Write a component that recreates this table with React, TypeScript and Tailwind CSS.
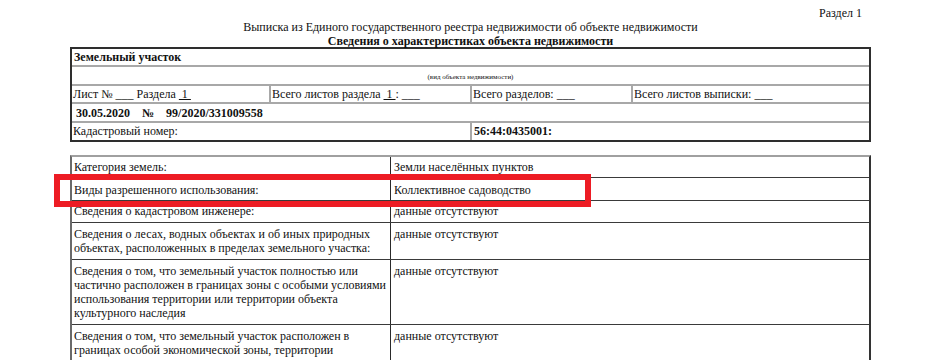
import React from "react";

const serif = { fontFamily: '"Liberation Serif", "Times New Roman", serif' };

function Row2({
  h,
  left,
  right,
  pt = "pt-[3px]",
  last = false,
}: {
  h: string;
  left: React.ReactNode;
  right: React.ReactNode;
  pt?: string;
  last?: boolean;
}) {
  return (
    <div className={`flex ${h} ${last ? "" : "border-b border-[#3a3a3a]"}`}>
      <div className={`w-[319px] shrink-0 border-r border-[#2a2a2a] pl-[2px] ${pt} whitespace-nowrap`}>{left}</div>
      <div className={`flex-1 pl-[3px] ${pt} whitespace-nowrap`}>{right}</div>
    </div>
  );
}

export default function App() {
  return (
    <div
      className="w-[940px] h-[360px] overflow-hidden bg-white text-[12px] leading-[14px] text-[#111]"
      style={serif}
    >
      {/* header */}
      <div className="w-[801px] ml-[70px] pt-[6px]">
        <div className="flex justify-end pr-[9px] h-[14px]">Раздел 1</div>
        <div className="text-center h-[14px]">
          Выписка из Единого государственного реестра недвижимости об объекте недвижимости
        </div>
        <div className="text-center font-bold h-[14px]">
          Сведения о характеристиках объекта недвижимости
        </div>
      </div>

      {/* table 1 */}
      <div className="w-[801px] ml-[70px] border-2 border-[#2e2e2e] mt-[-1px]">
        <div className="h-[18px] border-b-2 border-[#a8a8a8] pl-[2px] pt-[1px] font-bold">
          Земельный участок
        </div>
        <div className="h-[19px] border-b-2 border-[#a8a8a8] flex items-center justify-center text-[7px] leading-[8px] pt-[2px]">
          (вид объекта недвижимости)
        </div>
        <div className="h-[18px] border-b-2 border-[#a8a8a8] flex">
          <div className="w-[199px] shrink-0 border-r-2 border-[#a8a8a8] pl-[1px] pt-[1px]">
            Лист № ___ Раздела <span className="underline">&nbsp;1&nbsp;</span>
          </div>
          <div className="w-[201px] shrink-0 border-r-2 border-[#a8a8a8] pl-[1px] pt-[1px]">
            Всего листов раздела <span className="underline">&nbsp;1&nbsp;</span>: ___
          </div>
          <div className="w-[161px] shrink-0 border-r-2 border-[#a8a8a8] pl-[1px] pt-[1px]">
            Всего разделов: ___
          </div>
          <div className="flex-1 pl-[1px] pt-[1px]">Всего листов выписки: ___</div>
        </div>
        <div className="h-[19px] border-b-2 border-[#a8a8a8] pl-[4px] pt-[2px] font-bold whitespace-pre">
          {"30.05.2020    №    99/2020/331009558"}
        </div>
        <div className="h-[17px] flex">
          <div className="w-[400px] shrink-0 border-r-2 border-[#a8a8a8] pl-[1px] pt-[1px]">
            Кадастровый номер:
          </div>
          <div className="flex-1 pl-[2px] pt-[1px] font-bold">56:44:0435001:</div>
        </div>
      </div>

      {/* table 2 */}
      <div className="relative w-[801px] ml-[70px] mt-[13px] border-t-2 border-l-2 border-r-2 border-t-[#a0a0a0] border-l-[#6a6a6a] border-r-[#333]">
        <Row2 h="h-[21px]" left="Категория земель:" right="Земли населённых пунктов" pt="pt-[3px]" />
        <Row2
          h="h-[23px]"
          left="Виды разрешенного использования:"
          right="Коллективное садоводство"
          pt="pt-[5px]"
        />
        <Row2
          h="h-[22px]"
          left="Сведения о кадастровом инженере:"
          right="данные отсутствуют"
          pt="pt-[3px]"
        />
        <Row2
          h="h-[37px]"
          left={
            <>
              Сведения о лесах, водных объектах и об иных природных
              <br />
              объектах, расположенных в пределах земельного участка:
            </>
          }
          right="данные отсутствуют"
          pt="pt-[4px]"
        />
        <Row2
          h="h-[65px]"
          left={
            <>
              Сведения о том, что земельный участок полностью или
              <br />
              частично расположен в границах зоны с особыми условиями
              <br />
              использования территории или территории объекта
              <br />
              культурного наследия
            </>
          }
          right="данные отсутствуют"
          pt="pt-[4px]"
        />
        <Row2
          h="h-[40px]"
          last
          left={
            <>
              Сведения о том, что земельный участок расположен в
              <br />
              границах особой экономической зоны, территории
            </>
          }
          right="данные отсутствуют"
          pt="pt-[4px]"
        />

        {/* red highlight */}
        <div className="absolute left-[-18px] top-[17px] w-[537px] h-[33px] border-[6px] border-[#ed1c24]" />
      </div>
    </div>
  );
}
